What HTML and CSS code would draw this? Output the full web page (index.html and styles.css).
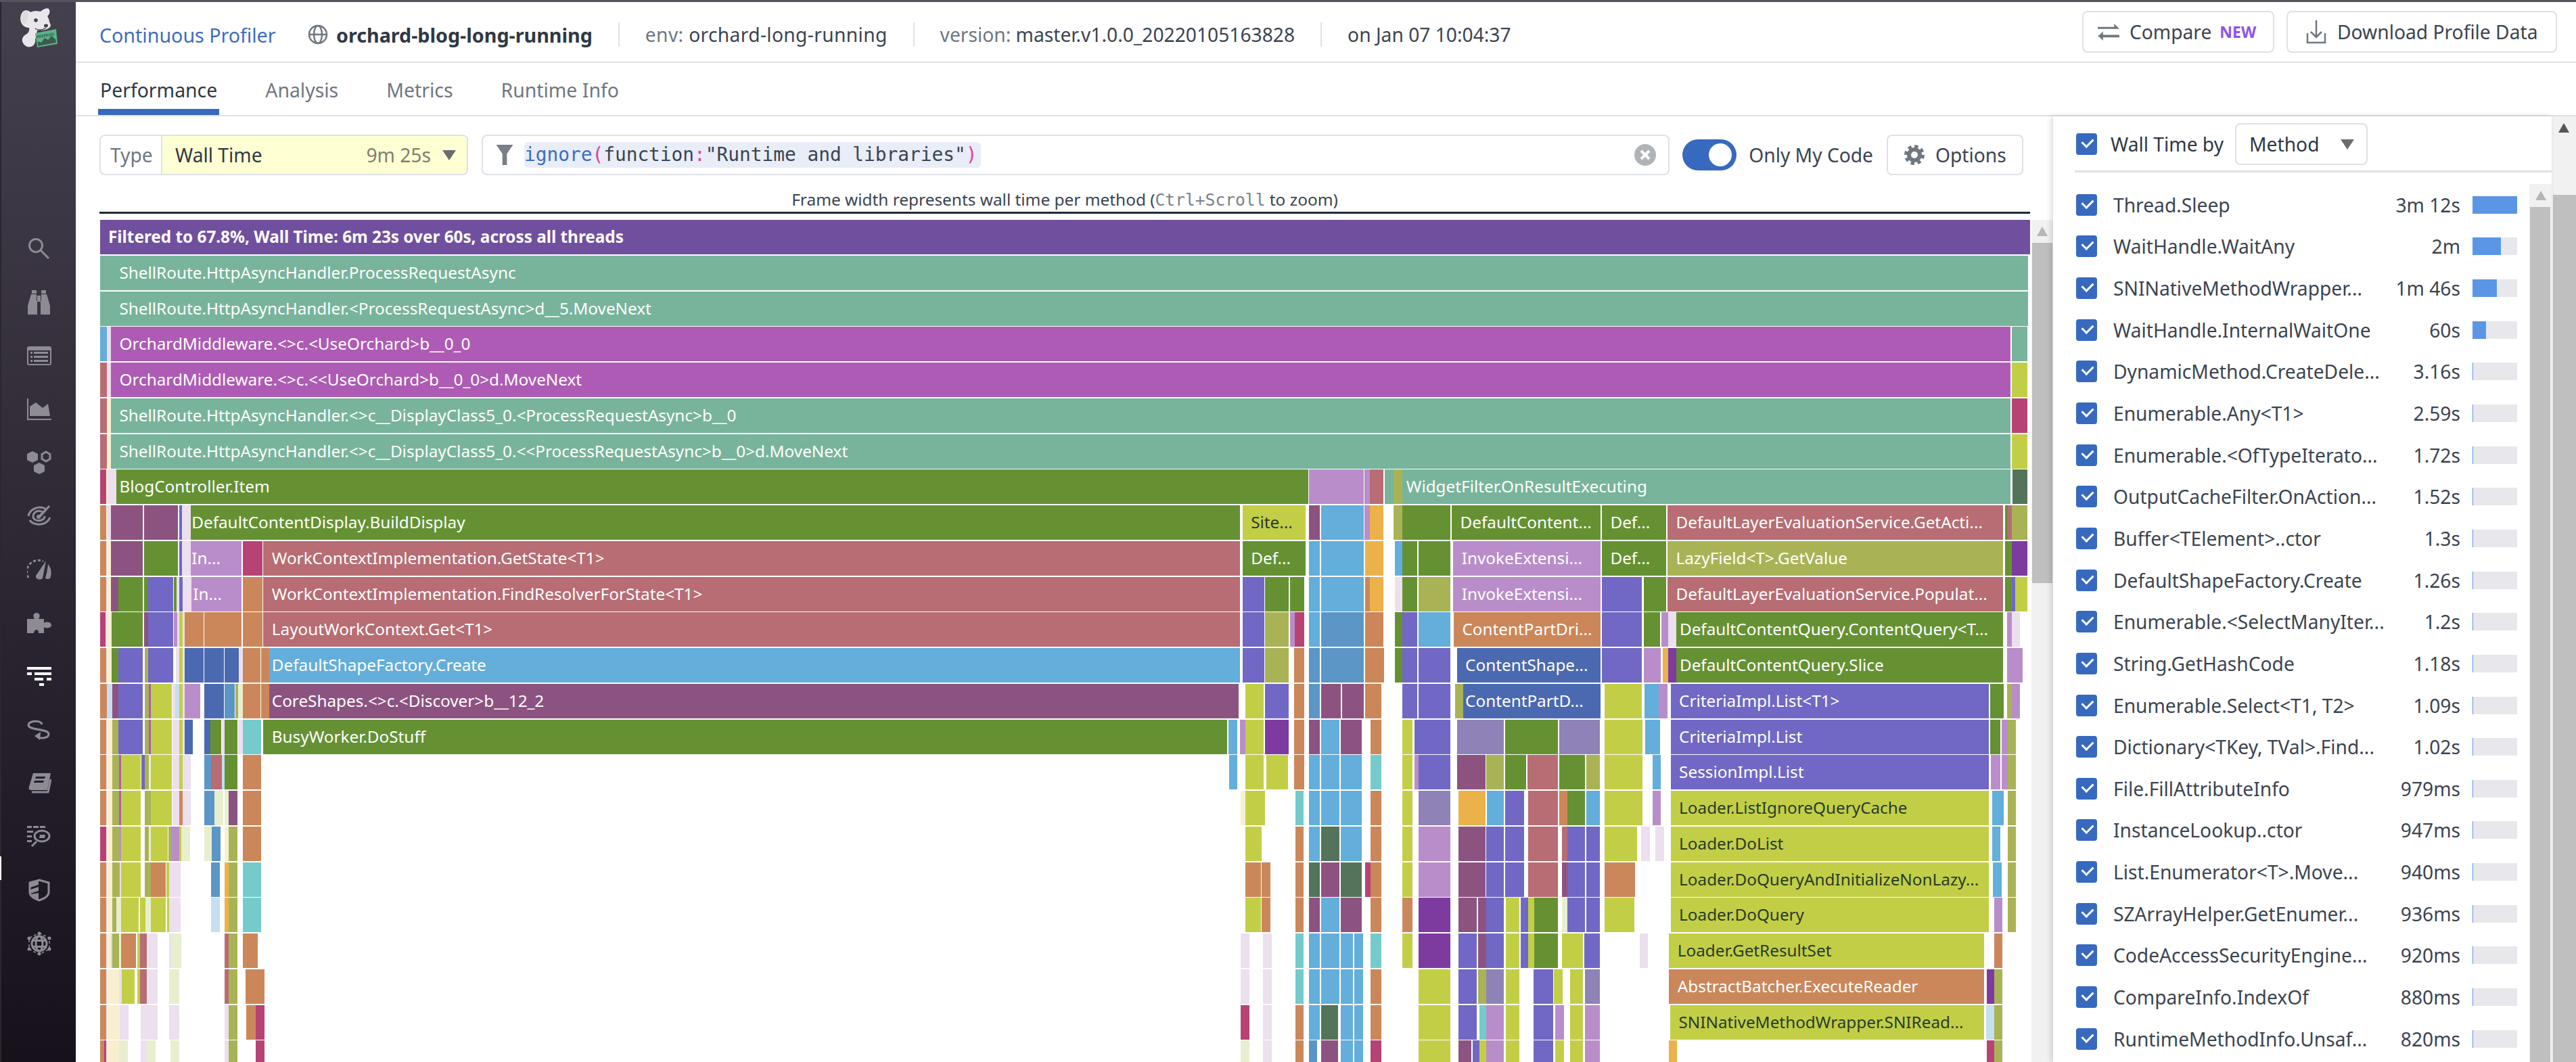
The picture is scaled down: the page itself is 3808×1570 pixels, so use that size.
FILE: index.html
```html
<!DOCTYPE html>
<html lang="en">
<head>
<meta charset="utf-8">
<title>Continuous Profiler</title>
<link rel="stylesheet" href="styles.css">
</head>
<body>
<div class="topstrip"></div>
<div class="shell">
  <nav class="rail">
    <span class="rail-marker"></span>
    <svg class="logo" viewBox="0 0 56 66">
      <path class="dog" d="M13 30C3 30-2 20 1 11c2-7 9-9 14-4 4-2 10-2 15-1 3-3 9-6 12-4 3 3 1 9-2 11 2 3 3 6 3 9 2 2 3 5 0 8-5 4-12 4-18 4-1 4-1 9-3 13 1 5-2 10-6 11-6 2-12-3-13-8-1-6 3-9 7-11 2-2 4-5 3-9z"/>
      <path class="dog-ear" d="M11 6c-5-1-9 3-10 8 0 5 3 10 6 11 3-4 6-12 4-19z"/>
      <circle class="dog-eye" cx="23" cy="19" r="2.800"/>
      <ellipse class="dog-eye" cx="38" cy="27" rx="3" ry="2.400"/>
      <path class="dog-mouth" d="M22 31c4 3 10 3 16-1"/>
      <path class="badge" d="M22 38L53 32L55 54L25 59Z"/>
      <text class="badge-text" x="24" y="46" transform="rotate(-10 24 46)">PREPROD</text>
      <path class="badge-chart" d="M26 57L25.500 50L31 52L36 45L41 48L46 42L52 47L53 52Z"/>
    </svg>
    <div class="rail-nav">
      <svg class="rail-icon" viewBox="0 0 36 36"><circle class="ln" cx="13" cy="13" r="9.500"/><path class="ln" d="M20 20L32 32"/></svg>
      <svg class="rail-icon" viewBox="0 0 36 36"><path d="M7 0h7v5H7zM21 0h7v5h-7zM6 6h8v10h1v20H1V23zM29 6h-8v10h-1v20h14V23zM15 8h5v9h-5z"/></svg>
      <svg class="rail-icon" viewBox="0 0 36 36"><path fill-rule="evenodd" d="M3 4h30a3 3 0 0 1 3 3v22a3 3 0 0 1-3 3H3a3 3 0 0 1-3-3V7a3 3 0 0 1 3-3zM2 10v20h32V10zM5 12h3v3H5zM10 12h21v3H10zM5 18h3v3H5zM10 18h21v3H10zM5 24h3v3H5zM10 24h21v3H10z"/></svg>
      <svg class="rail-icon" viewBox="0 0 36 36"><path d="M0 2h2v30h34v2H0zM4 28V14l9-6 10 8 8-6 3 18z"/></svg>
      <svg class="rail-icon" viewBox="0 0 36 36"><path d="M8 1l8 4v9l-8 4-8-4V5zM18 18l8 4v9l-8 4-8-4v-9z"/><path class="ln" d="M28 2l6 3.500v7l-6 3.500-6-3.500v-7z"/></svg>
      <svg class="rail-icon" viewBox="0 0 36 36"><path class="ln" d="M27 7C18 2 4 7 2 18M4 24c4 8 24 10 30-4M23 12c-7-4-14 0-14 7 0 4 6 7 12 5 3-1 5-3 5-6"/><path d="M16 18L32 2l2 2-15 17z"/><circle cx="17" cy="19" r="3"/></svg>
      <svg class="rail-icon" viewBox="0 0 36 36"><path class="ln dash" d="M2 30A17 17 0 0 1 24 6"/><path d="M13 27L28 5l-5 26c-3 3-11 2-10-4zM31 10c5 6 6 14 3 21-2 1-6 2-7-1 2-6 3-12 4-20z"/></svg>
      <svg class="rail-icon" viewBox="0 0 36 36"><path d="M0 12h11c-4-6 0-9 3-9s7 3 3 9h8v6c4-3 11-1 11 3s-7 6-11 3v9H17c1-5-5-8-7-1v1H0z"/></svg>
      <svg class="rail-icon rail-icon-on" viewBox="0 0 36 36"><path d="M0 4h36v4H0zM0 12h7v4H0zM11 12h25v4H11zM11 20h13v4H11zM29 20h7v4h-7zM18 28h7v4h-7z"/></svg>
      <svg class="rail-icon" viewBox="0 0 36 36"><path class="ln" d="M22 10c-1-7-20-6-20 1 0 8 30 5 30 13 0 6-11 8-17 4"/><path d="M20 21l-1 12-8-6z"/></svg>
      <svg class="rail-icon" viewBox="0 0 36 36"><path fill-rule="evenodd" d="M9 3h26l-5 25H6C3 28 2 26 3 23zM13 8l-1 3h14l1-3zM11 14l-1 3h14l1-3z"/><path class="ln" d="M35 12l-4 19H7"/></svg>
      <svg class="rail-icon" viewBox="0 0 36 36"><path d="M0 2h7v3H0zM9 2h8v3H9zM19 2h8v3h-8zM0 9h9v3H0zM0 16h7v3H0zM0 23h7v3H0zM19 15h8l-1 5h-8z"/><ellipse class="ln" cx="22" cy="17" rx="11" ry="8"/><path class="ln" d="M14 25L7 32"/></svg>
      <svg class="rail-icon" viewBox="0 0 36 36"><path class="ln" d="M18 3l14 4v14c0 6-8 10-14 12C12 31 4 27 4 21V7z"/><path d="M17 4v6L5 14V8zM17 13v6L5 23v-6zM17 22v9c-5-2-10-4-11-7z"/></svg>
      <svg class="rail-icon" viewBox="0 0 36 36"><circle class="ln" cx="18" cy="18" r="11"/><path d="M9 12h18v3H9zM8 21h20v3H8z"/><ellipse class="ln" cx="18" cy="18" rx="5" ry="11"/><path class="thin dash" d="M18 2l15 8v16l-15 8-15-8V10z"/><circle cx="18" cy="3" r="2.500"/><circle cx="33" cy="10" r="2.500"/><circle cx="33" cy="26" r="2.500"/><circle cx="18" cy="33" r="2.500"/><circle cx="3" cy="26" r="2.500"/><circle cx="3" cy="10" r="2.500"/></svg>
    </div>
  </nav>

  <div class="main">
    <header class="header">
      <a class="product">Continuous Profiler</a>
      <svg class="globe" viewBox="0 0 30 30"><circle cx="15" cy="15" r="13"/><ellipse cx="15" cy="15" rx="6" ry="13"/><path d="M2 15h26"/></svg>
      <strong class="service">orchard-blog-long-running</strong>
      <span class="sep"></span>
      <span class="meta meta-env"><span class="meta-key">env:</span> orchard-long-running</span>
      <span class="sep"></span>
      <span class="meta"><span class="meta-key">version:</span> master.v1.0.0_20220105163828</span>
      <span class="sep"></span>
      <span class="meta">on Jan 07 10:04:37</span>
      <button class="btn btn-compare">
        <svg class="btn-icon" viewBox="0 0 34 34"><path d="M0 9h25V4l8 8H0zM33 21H8v-5l-8 8h33v-3z"/><path d="M0 22h33v3H8v5l-8-8z"/></svg>
        Compare <span class="new">NEW</span>
      </button>
      <button class="btn btn-download">
        <svg class="btn-icon btn-icon-line" viewBox="0 0 30 36"><path d="M15 1v25M7 18l8 8 8-8M2 20v14h26V20"/></svg>
        Download Profile Data
      </button>
    </header>

    <div class="tabs">
      <a class="tab tab-active">Performance</a>
      <a class="tab">Analysis</a>
      <a class="tab">Metrics</a>
      <a class="tab">Runtime Info</a>
    </div>

    <div class="content">
      <section class="profile">
        <div class="filters">
          <div class="type-select">
            <span class="type-label">Type</span>
            <span class="type-value">
              <span class="type-name">Wall Time</span>
              <span class="type-total">9m 25s</span>
              <span class="caret"></span>
            </span>
          </div>
          <div class="search">
            <svg class="funnel" viewBox="0 0 30 36"><path d="M0 0h30L19 16v20h-8V16z"/></svg>
            <code class="query"><span class="q-fn">ignore</span><span class="q-paren">(</span>function<span class="q-colon">:</span>"Runtime and libraries"<span class="q-paren">)</span></code>
            <span class="clear"><svg viewBox="0 0 16 16"><path d="M5 5l6 6M11 5l-6 6"/></svg></span>
          </div>
          <span class="toggle"><span class="toggle-knob"></span></span>
          <span class="toggle-label">Only My Code</span>
          <button class="btn btn-options">
            <svg class="btn-icon gear" viewBox="0 0 30 30"><circle class="gear-teeth" cx="15" cy="15" r="12"/><circle class="gear-ring" cx="15" cy="15" r="8"/></svg>
            Options
          </button>
        </div>
        <p class="hint">Frame width represents wall time per method (<code class="hint-key">Ctrl+Scroll</code> to zoom)</p>
        <div class="hint-rule"></div>
        <div class="flame-wrap">
          <div class="flame" id="flame"></div>
          <div class="sb sb-flame">
            <div class="sb-btn"><span class="sb-arrow"></span></div>
            <div class="sb-thumb"></div>
          </div>
        </div>
      </section>

      <aside class="panel">
        <div class="panel-head">
          <span class="check"></span>
          <span class="panel-title">Wall Time by</span>
          <span class="select">Method<span class="caret"></span></span>
        </div>
        <div class="panel-body">
          <ul class="methods">
            <li class="method"><span class="check"></span><span class="m-name">Thread.Sleep</span><span class="m-time">3m 12s</span><span class="m-bar"><span class="m-fill" style="width:100%"></span></span></li>
            <li class="method"><span class="check"></span><span class="m-name">WaitHandle.WaitAny</span><span class="m-time">2m</span><span class="m-bar"><span class="m-fill" style="width:63%"></span></span></li>
            <li class="method"><span class="check"></span><span class="m-name">SNINativeMethodWrapper...</span><span class="m-time">1m 46s</span><span class="m-bar"><span class="m-fill" style="width:55%"></span></span></li>
            <li class="method"><span class="check"></span><span class="m-name">WaitHandle.InternalWaitOne</span><span class="m-time">60s</span><span class="m-bar"><span class="m-fill" style="width:31%"></span></span></li>
            <li class="method"><span class="check"></span><span class="m-name">DynamicMethod.CreateDele...</span><span class="m-time">3.16s</span><span class="m-bar"><span class="m-fill" style="width:1%"></span></span></li>
            <li class="method"><span class="check"></span><span class="m-name">Enumerable.Any&lt;T1&gt;</span><span class="m-time">2.59s</span><span class="m-bar"><span class="m-fill" style="width:1%"></span></span></li>
            <li class="method"><span class="check"></span><span class="m-name">Enumerable.&lt;OfTypeIterato...</span><span class="m-time">1.72s</span><span class="m-bar"><span class="m-fill m-min"></span></span></li>
            <li class="method"><span class="check"></span><span class="m-name">OutputCacheFilter.OnAction...</span><span class="m-time">1.52s</span><span class="m-bar"><span class="m-fill m-min"></span></span></li>
            <li class="method"><span class="check"></span><span class="m-name">Buffer&lt;TElement&gt;..ctor</span><span class="m-time">1.3s</span><span class="m-bar"><span class="m-fill m-min"></span></span></li>
            <li class="method"><span class="check"></span><span class="m-name">DefaultShapeFactory.Create</span><span class="m-time">1.26s</span><span class="m-bar"><span class="m-fill m-min"></span></span></li>
            <li class="method"><span class="check"></span><span class="m-name">Enumerable.&lt;SelectManyIter...</span><span class="m-time">1.2s</span><span class="m-bar"><span class="m-fill m-min"></span></span></li>
            <li class="method"><span class="check"></span><span class="m-name">String.GetHashCode</span><span class="m-time">1.18s</span><span class="m-bar"><span class="m-fill m-min"></span></span></li>
            <li class="method"><span class="check"></span><span class="m-name">Enumerable.Select&lt;T1, T2&gt;</span><span class="m-time">1.09s</span><span class="m-bar"><span class="m-fill m-min"></span></span></li>
            <li class="method"><span class="check"></span><span class="m-name">Dictionary&lt;TKey, TVal&gt;.Find...</span><span class="m-time">1.02s</span><span class="m-bar"><span class="m-fill m-min"></span></span></li>
            <li class="method"><span class="check"></span><span class="m-name">File.FillAttributeInfo</span><span class="m-time">979ms</span><span class="m-bar"><span class="m-fill m-min"></span></span></li>
            <li class="method"><span class="check"></span><span class="m-name">InstanceLookup..ctor</span><span class="m-time">947ms</span><span class="m-bar"><span class="m-fill m-min"></span></span></li>
            <li class="method"><span class="check"></span><span class="m-name">List.Enumerator&lt;T&gt;.Move...</span><span class="m-time">940ms</span><span class="m-bar"><span class="m-fill m-min"></span></span></li>
            <li class="method"><span class="check"></span><span class="m-name">SZArrayHelper.GetEnumer...</span><span class="m-time">936ms</span><span class="m-bar"><span class="m-fill m-min"></span></span></li>
            <li class="method"><span class="check"></span><span class="m-name">CodeAccessSecurityEngine...</span><span class="m-time">920ms</span><span class="m-bar"><span class="m-fill m-min"></span></span></li>
            <li class="method"><span class="check"></span><span class="m-name">CompareInfo.IndexOf</span><span class="m-time">880ms</span><span class="m-bar"><span class="m-fill m-min"></span></span></li>
            <li class="method"><span class="check"></span><span class="m-name">RuntimeMethodInfo.Unsaf...</span><span class="m-time">820ms</span><span class="m-bar"><span class="m-fill m-min"></span></span></li>
          </ul>
          <div class="sb sb-list">
            <div class="sb-btn"><span class="sb-arrow"></span></div>
            <div class="sb-thumb"></div>
          </div>
        </div>
      </aside>

      <div class="sb sb-page">
        <div class="sb-btn"><span class="sb-arrow sb-arrow-dark"></span></div>
        <div class="sb-thumb"></div>
      </div>
    </div>
  </div>
</div>
<script src="flame.js"></script>
</body>
</html>
```

FILE: styles.css
```css
* { box-sizing: border-box; }
html, body { margin: 0; height: 100%; }
body {
  width: 3808px;
  height: 1570px;
  overflow: hidden;
  background: #fff;
  color: #3b4450;
  font-family: "Noto Sans", sans-serif;
  font-size: 28.200px;
}
button { font: inherit; color: inherit; background: #fff; }
p, ul { margin: 0; padding: 0; }

.topstrip { height: 3px; background: #54545c; }
.shell { display: flex; height: 1567px; }

/* rail */
.rail {
  position: relative;
  flex: 0 0 112px;
  display: flex;
  flex-direction: column;
  align-items: center;
  padding-left: 2px;
  border-left: 2px solid #2a282e;
  background: linear-gradient(#45404d, #16111b);
}
.rail-marker { position: absolute; left: -2px; top: 1263px; width: 2px; height: 35px; background: #fff; }
.logo { width: 56px; height: 66px; margin-top: 8px; flex: none; overflow: visible; }
.dog { fill: #e8e6ea; }
.dog-ear { fill: #dcdade; }
.dog-eye { fill: #45404d; }
.dog-mouth { fill: none; stroke: #45404d; stroke-width: 1.500; }
.badge { fill: #5ab48a; }
.badge-text { font: 700 5.800px "Noto Sans", sans-serif; fill: #3c5a50; }
.badge-chart { fill: #3c5a50; }
.rail-nav { display: flex; flex-direction: column; gap: 43px; margin-top: 273px; }
.rail-icon { display: block; width: 36px; height: 36px; fill: #8e8b93; }
.rail-icon-on { fill: #fff; }
.ln { fill: none; stroke: #8e8b93; stroke-width: 3; }
.thin { fill: none; stroke: #8e8b93; stroke-width: 1.500; }
.dash { stroke-dasharray: 4 3; }

/* header */
.main { flex: 1; min-width: 0; display: flex; flex-direction: column; }
.header {
  flex: 0 0 90px;
  display: flex;
  align-items: center;
  padding: 8px 28px 0 35px;
  border-bottom: 2px solid #e0e0e6;
}
.product { color: #3d6cc0; width: 308px; font-size: 28.600px; }
.globe { width: 30px; height: 30px; margin-right: 12px; fill: none; stroke: #6f7780; stroke-width: 2.500; }
.service { font-weight: 700; font-size: 28.700px; color: #2f3844; }
.sep { width: 2px; height: 36px; margin: 0 38px; background: #e0e0e6; }
.meta { color: #3b4450; }
.meta-env { letter-spacing: .35px; }
.meta-key { color: #6f7780; }
.btn {
  display: flex;
  align-items: center;
  height: 62px;
  border: 2px solid #e0e0e6;
  border-radius: 8px;
  white-space: nowrap;
  padding: 0;
}
.btn-icon { fill: #6f7780; flex: none; }
.btn-icon-line { fill: none; stroke: #6f7780; stroke-width: 2.500; }
.btn-compare { width: 284px; margin: 0 0 8px auto; padding-left: 21px; }
.btn-compare .btn-icon { width: 33px; height: 33px; margin-right: 14px; }
.new { margin-left: 12px; color: #8f4ff0; font-weight: 700; font-size: 23px; }
.btn-download { width: 400px; margin: 0 0 8px 18px; padding-left: 27px; }
.btn-download .btn-icon { width: 30px; height: 36px; margin-right: 16px; }

/* tabs */
.tabs {
  flex: 0 0 79px;
  display: flex;
  gap: 65px;
  padding-left: 33px;
  border-bottom: 2px solid #e0e0e6;
  font-size: 28.400px;
}
.tab {
  height: 77px;
  padding: 20px 3px 0;
  color: #6f7780;
  line-height: 40px;
  border-bottom: 9px solid transparent;
}
.tab-active { color: #2f3844; border-bottom-color: #3769bf; }

/* content */
.content { flex: 1; min-height: 0; display: flex; }
.profile { flex: 0 0 2923px; min-width: 0; padding: 27px 0 0 35px; display: flex; flex-direction: column; }
.filters { display: flex; align-items: center; height: 60px; margin-right: 44px; }
.type-select {
  flex: 0 0 545px;
  height: 60px;
  display: flex;
  border: 2px solid #e0e0e6;
  border-radius: 8px;
  overflow: hidden;
}
.type-label { flex: 0 0 91px; padding-left: 14px; line-height: 56px; color: #6f7780; border-right: 2px solid #e0e0e6; }
.type-value { flex: 1; display: flex; align-items: center; padding: 0 16px 0 19px; background: #ffffd4; }
.type-name { flex: 1; color: #2f3844; }
.type-total { color: #7f8170; margin-right: 17px; }
.caret {
  display: inline-block;
  width: 0;
  height: 0;
  border: 10px solid transparent;
  border-top: 15px solid #6a6d70;
  border-bottom: 0;
}
.search {
  flex: 1;
  height: 60px;
  margin-left: 20px;
  display: flex;
  align-items: center;
  padding-left: 17px;
  border: 2px solid #e0e0e6;
  border-radius: 8px;
}
.funnel { width: 30px; height: 30px; fill: #787f87; margin-right: 14px; flex: none; }
.query {
  font: 27.800px/38px "DejaVu Sans Mono", monospace;
  color: #3b4450;
  background: #e8edf7;
  border-radius: 6px;
  white-space: pre;
  padding-right: 6px;
}
.q-fn { color: #3d6cc0; }
.q-paren, .q-colon { color: #e0409a; }
.clear {
  margin-left: auto;
  margin-right: 18px;
  width: 32px;
  height: 32px;
  border-radius: 50%;
  background: #b0b3b8;
}
.clear svg { display: block; fill: none; stroke: #fff; stroke-width: 2; }
.toggle {
  flex: none;
  width: 80px;
  height: 46px;
  margin-left: 19px;
  padding: 6px 7px 0 39px;
  border-radius: 23px;
  background: #3769bf;
}
.toggle-knob { display: block; width: 34px; height: 34px; border-radius: 50%; background: #fff; }
.toggle-label { flex: none; margin-left: 18px; color: #3b4450; }
.btn-options { flex: none; width: 202px; margin-left: 20px; height: 60px; padding-left: 24px; }
.gear { width: 30px; height: 30px; margin-right: 16px; }
.gear-teeth { fill: none; stroke: #6f7780; stroke-width: 6; stroke-dasharray: 5 4.400; }
.gear-ring { fill: none; stroke: #6f7780; stroke-width: 6; }
.hint {
  width: 2854px;
  height: 54px;
  padding-top: 20px;
  text-align: center;
  font-size: 24.400px;
  line-height: 32px;
  color: #3b4450;
}
.hint-key { font: 24.600px/32px "DejaVu Sans Mono", monospace; color: #7a8088; }
.hint-rule { flex: none; width: 2854px; height: 3px; margin-bottom: 9px; background: #1f2b33; }
.flame-wrap { flex: 1; min-height: 0; display: flex; overflow: hidden; }
.flame { flex: 0 0 2856px; min-width: 0; overflow: hidden; }
.flame-row { position: relative; height: 51px; margin-bottom: 1.750px; }
.frame {
  position: absolute;
  top: 0;
  bottom: 0;
  overflow: hidden;
  padding-left: 12.500px;
  color: #fff;
  font-size: 24.300px;
  line-height: 50px;
  white-space: nowrap;
}
.frame-root { font-weight: 700; }
.c-t { background: #78b49b; } .c-x { background: #714f9f; } .c-m { background: #ad5bb4; }
.c-g { background: #659133; } .c-l { background: #b98dca; } .c-r { background: #b76d73; }
.c-s { background: #63aedb; } .c-e { background: #5b96c7; } .c-p { background: #8c5380; }
.c-v { background: #7068c4; } .c-n { background: #4a69b0; } .c-o { background: #cb875a; }
.c-y { background: #c2cf46; color: #2b3a2a; } .c-w { background: #a9b356; } .c-a { background: #ebb24a; }
.c-k { background: #b74374; } .c-d { background: #54735b; } .c-c { background: #75cbcc; }
.c-u { background: #7d3a9f; } .c-h { background: #8f82b7; }
.c-z { background: #ecdfee; } .c-q { background: #f8efd0; } .c-b { background: #c6deef; } .c-j { background: #e8efce; }

/* panel */
.panel {
  position: relative;
  flex: 0 0 737px;
  display: flex;
  flex-direction: column;
  background: #fff;
  box-shadow: -3px 0 8px rgba(0, 0, 0, .14);
}
.panel-head {
  flex: 0 0 83px;
  display: flex;
  align-items: center;
  margin-left: 32px;
  padding: 2px 0 0 2px;
  border-bottom: 3px solid #e0e0e6;
}
.check {
  position: relative;
  flex: none;
  width: 31px;
  height: 32px;
  border-radius: 4px;
  background: #3769bf;
}
.check::after {
  content: "";
  position: absolute;
  left: 9px;
  top: 7px;
  width: 13px;
  height: 8px;
  border-left: 3px solid #fff;
  border-bottom: 3px solid #fff;
  transform: rotate(-45deg);
}
.panel-title { margin-left: 20px; color: #2f3844; }
.select {
  display: flex;
  align-items: center;
  justify-content: space-between;
  width: 196px;
  height: 62px;
  margin-left: 17px;
  padding: 0 18px 0 19px;
  border: 2px solid #e0e0e6;
  border-radius: 8px;
  color: #2f3844;
}
.panel-body { flex: 1; min-height: 0; display: flex; margin-top: 17px; overflow: hidden; }
.methods { flex: 0 0 704px; list-style: none; }
.method { display: flex; align-items: center; height: 61.650px; padding: 0 18px 0 34px; }
.m-name { flex: 1; min-width: 0; margin-left: 24px; white-space: nowrap; color: #3b4450; }
.m-time { margin: 0 18px 0 8px; color: #3b4450; }
.m-bar { flex: none; width: 66px; height: 26px; background: #e8e8ec; }
.m-fill { display: block; height: 100%; background: #5b96e6; }
.m-min { width: 1px; }

/* scrollbars */
.sb { display: flex; flex-direction: column; background: #f1f1f1; }
.sb-btn { display: flex; justify-content: center; padding-top: 10px; }
.sb-arrow { width: 0; height: 0; border: 8px solid transparent; border-bottom: 14px solid #b6b6b6; border-top: 0; }
.sb-arrow-dark { border-bottom-color: #555; }
.sb-thumb { background: #bfbfbf; }
.sb-flame { flex: 0 0 32px; margin-left: 0; }
.sb-flame .sb-btn { height: 34px; }
.sb-flame .sb-thumb { height: 503px; margin: 0 1px; }
.sb-list { flex: 0 0 33px; }
.sb-list .sb-btn { height: 34px; }
.sb-list .sb-thumb { flex: 1; margin: 0 2px 0 1px; }
.sb-page { flex: 0 0 36px; }
.sb-page .sb-btn { height: 116px; }
.sb-page .sb-thumb { flex: 1; margin-left: 2px; }
```

FILE: flame.js
```js
// Flame graph data. Each row: frames in the leading block (A), the trailing
// block (B), and labelled frames in chart pixels. Codes are colour classes.
var A = function (v) { return 100 + v / 3; };
var B = function (v) { return 1800 + v / 1.3067; };
var ORIGIN = 147;

var labelled = [
  [0, 147.5, 3001, 'x', 'Filtered to 67.8%, Wall Time: 6m 23s over 60s, across all threads', 'frame-root'],
  [1, 147.5, 157.5, 't'], [1, 159, 162, 't'], [1, 164, 2998, 't', 'ShellRoute.HttpAsyncHandler.ProcessRequestAsync'],
  [2, 147.5, 157.5, 't'], [2, 159, 162, 't'], [2, 164, 2998, 't', 'ShellRoute.HttpAsyncHandler.<ProcessRequestAsync>d__5.MoveNext'],
  [3, 147.5, 155, 's'], [3, 158, 160, 'z'], [3, 161, 162, 'z'], [3, 164, 2972.4, 'm', 'OrchardMiddleware.<>c.<UseOrchard>b__0_0'], [3, 2974, 2997, 't'],
  [4, 147.5, 155, 'r'], [4, 158, 160, 'z'], [4, 161, 162, 'z'], [4, 164, 2972.4, 'm', 'OrchardMiddleware.<>c.<<UseOrchard>b__0_0>d.MoveNext'], [4, 2974, 2997, 'y'],
  [5, 147.5, 155, 'r'], [5, 158, 159, 'q'], [5, 164, 2972.4, 't', 'ShellRoute.HttpAsyncHandler.<>c__DisplayClass5_0.<ProcessRequestAsync>b__0'], [5, 2974, 2997, 'k'],
  [6, 147.5, 155, 'r'], [6, 158, 159, 'q'], [6, 164, 2972.4, 't', 'ShellRoute.HttpAsyncHandler.<>c__DisplayClass5_0.<<ProcessRequestAsync>b__0>d.MoveNext'], [6, 2974, 2997, 'y'],
  [7, 164, 1934, 'g', 'BlogController.Item'], [7, 2066.3, 2972.4, 't', 'WidgetFilter.OnResultExecuting'],
  [8, 270.7, 1833, 'g', 'DefaultContentDisplay.BuildDisplay'], [8, 1836.7, 1930, 'y', 'Site...'], [8, 2146, 2366.3, 'g', 'DefaultContent...'], [8, 2367.9, 2462.7, 'g', 'Def...'], [8, 2465, 2961, 'r', 'DefaultLayerEvaluationService.GetActi...'],
  [9, 270.7, 357, 'l', 'In...'], [9, 389.3, 1833, 'r', 'WorkContextImplementation.GetState<T1>'], [9, 1836.7, 1930, 'g', 'Def...'], [9, 2148.2, 2366.3, 'l', 'InvokeExtensi...'], [9, 2367.9, 2462.7, 'g', 'Def...'], [9, 2465, 2961, 'w', 'LazyField<T>.GetValue'],
  [10, 272.7, 357, 'l', 'In...'], [10, 389.3, 1833, 'r', 'WorkContextImplementation.FindResolverForState<T1>'], [10, 2148.2, 2366.3, 'l', 'InvokeExtensi...'], [10, 2465, 2961, 'r', 'DefaultLayerEvaluationService.Populat...'],
  [11, 389.3, 1833, 'r', 'LayoutWorkContext.Get<T1>'], [11, 2149, 2366.3, 'o', 'ContentPartDri...'], [11, 2470.4, 2961, 'g', 'DefaultContentQuery.ContentQuery<T...'],
  [12, 389.3, 1833, 's', 'DefaultShapeFactory.Create'], [12, 2153.6, 2366.3, 'n', 'ContentShape...'], [12, 2470.4, 2961, 'g', 'DefaultContentQuery.Slice'],
  [13, 389.3, 1831, 'p', 'CoreShapes.<>c.<Discover>b__12_2'], [13, 2153.6, 2366.3, 'n', 'ContentPartD...'], [13, 2469.6, 2940.3, 'v', 'CriteriaImpl.List<T1>'],
  [14, 389.3, 1814, 'g', 'BusyWorker.DoStuff'], [14, 2469.6, 2940.3, 'v', 'CriteriaImpl.List'],
  [15, 2469.6, 2940.3, 'v', 'SessionImpl.List'],
  [16, 2469.6, 2940.3, 'y', 'Loader.ListIgnoreQueryCache'],
  [17, 2469.6, 2940.3, 'y', 'Loader.DoList'],
  [18, 2469.6, 2940.3, 'y', 'Loader.DoQueryAndInitializeNonLazy...'],
  [19, 2469.6, 2940.3, 'y', 'Loader.DoQuery'],
  [20, 2467.3, 2932.6, 'y', 'Loader.GetResultSet'],
  [21, 2467.3, 2932.6, 'o', 'AbstractBatcher.ExecuteReader'],
  [22, 2468.9, 2932.6, 'y', 'SNINativeMethodWrapper.SNIRead...']
];

var blockA = {
  7: 'k143-164 q170-172 z178-180',
  8: 'o143-164 q170-172 z175-177 p192-334 p338-353 p356-490 v494-508 z508-511',
  9: 'o143-164 z170-172 q175-177 p192-334 g338-353 g356-490 v494-508 z508-511 k777-864',
  10: 'o143-164 z170-172 q175-177 p192-218 g225-334 g338-353 v356-468 g471-480 z484-490 v494-508 z510-514 o778-864',
  11: 'k143-164 z168-172 q175-177 g196-216 g225-334 p338-348 v356-468 l472-480 z487-490 y495-507 z509-512 o518-604 o607-770 o778-864',
  12: 'o143-164 z170-172 q175-177 g196-216 v225-334 w342-346 v356-468 z480-482 y495-507 z509-512 n518-604 n607-694 n697-760 z760-767 o778-856 o857-864',
  13: 'o143-164 b175-178 p199-216 v225-334 w342-346 m360-366 y369-463 z465-470 b478-482 y495-507 z509-512 l518-588 n607-694 e697-742 w743-750 j755-757 j765-768 o778-856 o857-860',
  14: 'o143-164 z170-172 q175-177 q192-194 w199-214 v225-334 w342-346 m360-366 y369-463 z465-470 y495-507 z509-512 n518-533 n607-624 g632-680 z685-690 g697-710 g714-744 z755-757 z765-768 c778-858',
  15: 'o143-164 z170-172 q175-177 q192-194 w199-214 m228-234 y238-325 v328-333 w342-346 j360-363 y369-463 z465-470 y495-507 z509-512 e606-618 r637-649 r658-672 b685-687 g697-710 g714-744 o778-858',
  16: 'o143-164 z170-172 q175-177 q192-194 w199-214 m228-234 y238-325 w342-346 y369-463 z465-470 o495-507 z509-512 e606-618 e637-649 j652-655 j697-710 p714-740 o778-858',
  17: 'k143-164 z170-172 q175-177 w199-214 l232-235 y238-325 w342-346 j360-363 y369-445 w448-455 l458-470 y495-503 j505-510 j606-608 j620-623 e640-650 q697-702 w714-736 o778-858',
  18: 'o143-164 z170-172 q175-177 w199-214 z232-235 y238-325 w342-346 o369-434 y438-445 z450-453 z462-465 e637-652 a697-702 w714-736 c778-858',
  19: 'o143-164 z170-172 q175-177 q192-194 w199-210 j215-218 y238-316 y320-325 j345-348 y369-436 y440-446 z450-453 z462-465 b636-638 a697-702 w714-736 c778-858',
  20: 'o143-164 z170-172 q175-177 b192-196 w199-210 j228-232 o238-304 y309-316 r320-325 z350-353 z360-362 z450-452 z456-458 j460-462 j465-467 r697-702 w714-736 o778-786 o790-842',
  21: 'o143-164 z170-172 q175-177 q192-194 z228-232 y240-298 y309-316 r320-325 z352-354 z360-362 j450-452 j456-458 r697-702 w714-736 o790-806 o810-832 o835-842',
  22: 'o143-164 z170-172 q175-177 q192-194 z232-235 z325-327 z330-332 z352-354 z360-362 z450-452 z456-458 z697-702 w714-736 o793-798 o810-818 k834-840',
  23: 'o143-160 k162-165 z170-172 q175-177 q192-194 j228-230 z325-327 z330-332 j352-354 j457-459 z697-702 w714-736 k835-838'
};

var blockB = {
  7: 'l176-282 l284-292 r294-320 t323-338 w340-346 d1535-1564',
  8: 'p176-198 s200-282 l284-292 a294-320 w340-346 g357-449 g1521-1524 r1526-1532 w1534-1564',
  9: 's176-198 s200-282 a285-320 s342-354 g357-386 g388-449 g1521-1524 u1534-1564',
  10: 'v48-90 g92-137 g140-167 s176-198 s200-282 o285-292 a294-320 z342-352 g357-386 w388-449 v742-820 g823-866 g1521-1530 v1534-1539 y1541-1564 r0-43',
  11: 'r0-43 v48-90 w92-137 l140-147 k149-167 s176-198 e200-282 o285-292 o294-320 g342-354 v357-386 s388-450 v742-820 g823-855 l857-866 z870-873 l1525-1532 z1534-1540',
  12: 's0-43 v48-90 w92-137 o148-167 e176-198 e200-282 o285-322 g342-354 v357-386 v388-450 v742-820 l823-856 a860-863 u870-874 l1525-1532 l1538-1540',
  13: 'p0-40 y53-89 v92-137 o148-167 e176-198 p200-238 p240-282 o285-316 v357-386 v388-450 w458-460 y748-820 s825-830 s837-850 l852-858 g1492-1518 w1525-1532 l1534-1536',
  14: 'g0-18 s21-38 l43-48 y53-89 u92-137 o148-167 p176-198 s200-235 p238-278 o295-316 y357-376 v380-386 v388-450 h463-553 g555-657 h660-738 y747-820 s826-832 s838-852 g1492-1512 l1515-1519 w1526-1532',
  15: 's22-38 y53-89 y94-136 o148-167 s176-198 s200-235 s238-278 c295-316 y357-376 l380-386 v388-450 p463-517 w519-553 g555-596 r598-657 g660-672 g676-710 w712-738 y747-820 s840-848 l1493-1512 l1515-1517 w1526-1532',
  16: 'q44-47 y53-91 c150-164 s176-198 s200-235 s238-278 o295-316 y357-376 h388-450 a465-517 s520-553 v555-592 r600-657 o660-663 g676-710 s712-738 y747-820 l840-846 s1496-1500 s1502-1510 w1526-1532',
  17: 'y53-85 o150-164 s176-198 d200-235 s238-278 o295-316 y357-376 l388-450 p465-517 v519-553 v555-592 r600-657 r665-672 v676-710 v712-738 y747-810 z818-820 z846-848 s1496-1503 w1526-1532',
  18: 'o53-83 o85-90 o150-164 d176-198 p200-235 d238-278 k285-290 o295-316 y357-376 l388-450 p465-517 v519-553 v555-592 r600-657 p665-672 v676-710 v712-738 o747-806 s1498-1502 w1526-1532',
  19: 'y53-83 o85-90 o150-164 p176-198 s200-235 p238-278 o295-316 o357-376 u388-450 p465-501 p503-517 v519-553 y556-583 v585-592 y600-610 g612-657 j665-668 v676-710 v712-738 y747-805 l1500-1502 w1526-1532',
  20: 'z45-47 z88-90 c150-164 s176-198 s200-235 s238-262 s264-278 c295-316 y357-376 u388-450 v465-501 p503-517 v519-553 y556-583 v585-592 y600-610 g612-657 y665-672 y681-705 v708-738 z815-817 o1500-1502',
  21: 'z45-47 z88-90 c150-164 s176-198 s200-235 s238-262 s264-278 o295-316 y388-450 v465-501 w503-517 h519-553 y556-583 v610-648 y650-660 y681-705 h710-738 u1486-1489 w1500-1502',
  22: 'k45-47 z88-90 o150-164 s176-198 d200-232 s238-262 s264-278 o295-316 y388-450 v465-501 c505-515 l519-553 y556-583 v610-648 l652-655 y681-705 l710-738 b1484-1486 w1500-1502',
  23: 'j45-47 z88-90 o150-164 e176-192 p200-232 s238-262 s264-278 k295-316 y388-450 p465-490 v492-502 y505-515 l519-553 y556-583 v610-648 y652-655 y681-705 l710-738 a871-873 k1486-1488 w1500-1502'
};

function parseBlock(table, convert, rows) {
  Object.keys(table).forEach(function (row) {
    table[row].split(' ').forEach(function (token) {
      var parts = token.match(/^([a-z])(\d+)-(\d+)$/);
      rows[row].push([convert(+parts[2]), convert(+parts[3]), parts[1]]);
    });
  });
}

var rows = [];
for (var i = 0; i < 24; i++) rows.push([]);
labelled.forEach(function (f) { rows[f[0]].push([f[1], f[2], f[3], f[4], f[5]]); });
parseBlock(blockA, A, rows);
parseBlock(blockB, B, rows);

var chart = document.getElementById('flame');
rows.forEach(function (frames) {
  var row = document.createElement('div');
  row.className = 'flame-row';
  frames.forEach(function (f) {
    var el = document.createElement('div');
    el.className = 'frame c-' + f[2] + (f[4] ? ' ' + f[4] : '');
    el.style.left = (f[0] - ORIGIN).toFixed(1) + 'px';
    el.style.width = (f[1] - f[0]).toFixed(1) + 'px';
    if (f[3]) el.textContent = f[3];
    row.appendChild(el);
  });
  chart.appendChild(row);
});
```
